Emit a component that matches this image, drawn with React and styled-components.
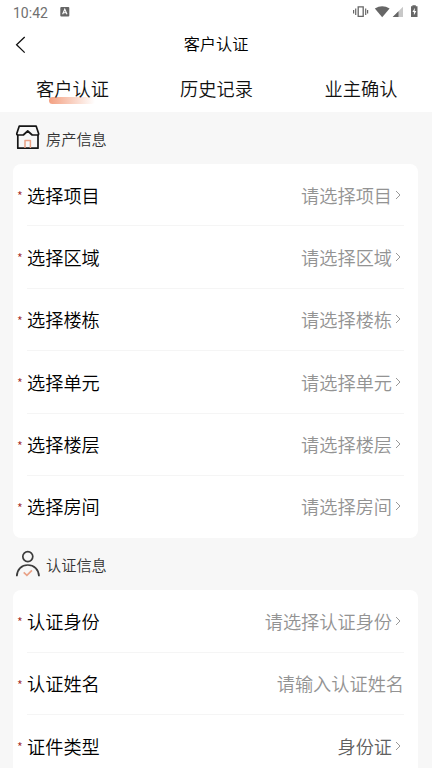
import React from 'react'
import styled, { createGlobalStyle } from 'styled-components'

const GlobalStyle = createGlobalStyle`
  * {
    box-sizing: border-box;
  }
  body {
    margin: 0;
    background: #f7f7f7;
    font-family: "Noto Sans CJK SC", sans-serif;
    font-weight: 350;
    color: #000;
  }
`

const Page = styled.div`
  width: 432px;
  height: 768px;
  overflow: hidden;
  background: #f7f7f7;
`

const StatusBar = styled.div`
  display: flex;
  align-items: center;
  height: 24px;
  padding: 0 12px 0 13px;
  background: #fff;
  color: #707070;
  font: 14px/24px Roboto, sans-serif;
`

const Clock = styled.span`
  width: 47px;
  padding-top: 1px;
  letter-spacing: 0;
`

const StatusIcons = styled.svg`
  margin-left: auto;
`

const NavBar = styled.div`
  display: grid;
  grid-template-columns: 60px 1fr 60px;
  align-items: center;
  height: 42px;
  background: #fff;
`

const BackIcon = styled.svg`
  margin-left: 14px;
`

const Title = styled.div`
  text-align: center;
  font-size: 16.2px;
  line-height: 38px;
  height: 42px;
`

const Tabs = styled.div`
  display: grid;
  grid-template-columns: repeat(3, 1fr);
  height: 46px;
  background: #fff;
`

const Tab = styled.div`
  position: relative;
  padding-left: 1px;
  text-align: center;
  font-size: 18.2px;
  line-height: 45px;
  color: #111;

  &:last-child {
    padding-left: 2px;
  }
`

const TabText = styled.span`
  position: relative;
`

const Underline = styled.i`
  position: absolute;
  left: 49px;
  top: 31px;
  width: 46px;
  height: 7px;
  border-radius: 4px;
  background: linear-gradient(90deg, #f3a081, #fff);
`

const SectionTitle = styled.div`
  display: flex;
  align-items: center;
  height: 52px;
  padding-left: 15px;
  font-size: 15.2px;
  color: #333;

  svg {
    margin-right: 5px;
  }
`

const SectionText = styled.span`
  padding-bottom: 1px;
`

const Card = styled.div`
  margin: 0 14.4px 0 13px;
  border-radius: 8px;
  background: #fff;
`

const Row = styled.div`
  display: flex;
  align-items: center;
  height: 62.4px;
  padding: 0 13.6px 1.4px 4px;
  font-size: 18.2px;
  background: linear-gradient(#f5f5f5, #f5f5f5) 14px 100% / 377px ${p => (p.$last ? 0 : 1)}px no-repeat;
`

const Star = styled.span`
  width: 10px;
  padding-top: 2px;
  color: #a02c2c;
  font-size: 12.5px;
`

const Value = styled.span`
  margin-left: auto;
  color: ${p => (p.$filled ? '#606060' : '#939393')};
`

const Arrow = styled.svg`
  margin: 0 2px 0 2px;
`

const houseFields = ['项目', '区域', '楼栋', '单元', '楼层', '房间']

const HouseIcon = () => (
  <svg width="26" height="28" viewBox="0 0 26 28" fill="none" stroke="#161616" strokeWidth="1.7" strokeLinejoin="round">
    <path d="M4.2 2.2H21.2L23.6 9.5Q23.8 11 22.3 11H17.2L12.7 7L8.3 11H3.2Q1.6 11 1.8 9.5Z" />
    <path d="M2.8 11V24.2H23V11" />
    <path d="M10 24V16.5H15.4V24" stroke="#eaa184" strokeWidth="1.5" />
  </svg>
)

const PersonIcon = () => (
  <svg width="26" height="28" viewBox="0 0 26 28" fill="none" stroke="#3c3c3c" strokeWidth="1.7">
    <circle cx="12.8" cy="6.6" r="5" />
    <path d="M1.8 26.2C2 19.4 6.5 15 12.8 15S23.8 19.4 24 26.2" />
    <path d="M8.7 22.4L11.9 25.4L16.9 20.4" stroke="#e9a287" strokeWidth="1.7" />
  </svg>
)

function Field({ label, value, filled, input, last }) {
  return (
    <Row $last={last}>
      <Star>*</Star>
      <span>{label}</span>
      <Value $filled={filled}>{value}</Value>
      {!input && (
        <Arrow width="8" height="12" viewBox="0 0 8 12" fill="none" stroke="#999">
          <path d="M2 2L6 6L2 10" />
        </Arrow>
      )}
    </Row>
  )
}

function App() {
  return (
    <Page>
      <GlobalStyle />
      <StatusBar>
        <Clock>10:42</Clock>
        <svg width="10" height="10" viewBox="0 0 10 10">
          <rect x="0.3" y="0" width="9" height="9.4" rx="1" fill="#666" />
          <path d="M2.6 7.3L4.8 2.2L7 7.3M3.5 5.7H6.1" fill="none" stroke="#fff" strokeWidth="1.1" />
        </svg>
        <StatusIcons width="68" height="14" viewBox="0 0 68 14" fill="#666">
          <path d="M6.2 1.8H11.2V11.4H6.2Z" fill="none" stroke="#666" strokeWidth="1.3" />
          <path d="M3.7 3.5V10M1.6 5V8.5M13.7 3.5V10M15.6 5V8.5" stroke="#666" strokeWidth="1.2" />
          <path d="M22.8 3.6Q30.2 -1.2 37.6 3.6L30.2 12.3Z" />
          <path d="M51 1.8V12H40.7Z" fill="#c8c8c8" />
          <path d="M46.5 6.2V12H40.7Z" />
          <path d="M60.4 1.2V0.2H63.8V1.2H65.5V12H59V1.2Z" />
          <path d="M63 2.8L60.4 7H61.9V10.3L64.3 5.9H62.6Z" fill="#fff" />
        </StatusIcons>
      </StatusBar>
      <NavBar>
        <BackIcon width="14" height="18" viewBox="0 0 14 18" fill="none" stroke="#111" strokeWidth="1.3">
          <path d="M10.7 1L2.6 8.8L10.7 16.6" />
        </BackIcon>
        <Title>客户认证</Title>
      </NavBar>
      <Tabs>
        <Tab>
          <Underline />
          <TabText>客户认证</TabText>
        </Tab>
        <Tab>历史记录</Tab>
        <Tab>业主确认</Tab>
      </Tabs>
      <SectionTitle>
        <HouseIcon />
        <SectionText>房产信息</SectionText>
      </SectionTitle>
      <Card>
        {houseFields.map((name, index) => (
          <Field
            key={name}
            label={`选择${name}`}
            value={`请选择${name}`}
            last={index === houseFields.length - 1}
          />
        ))}
      </Card>
      <SectionTitle>
        <PersonIcon />
        <SectionText>认证信息</SectionText>
      </SectionTitle>
      <Card>
        <Field label="认证身份" value="请选择认证身份" />
        <Field label="认证姓名" value="请输入认证姓名" input />
        <Field label="证件类型" value="身份证" filled />
      </Card>
    </Page>
  )
}

export default App
